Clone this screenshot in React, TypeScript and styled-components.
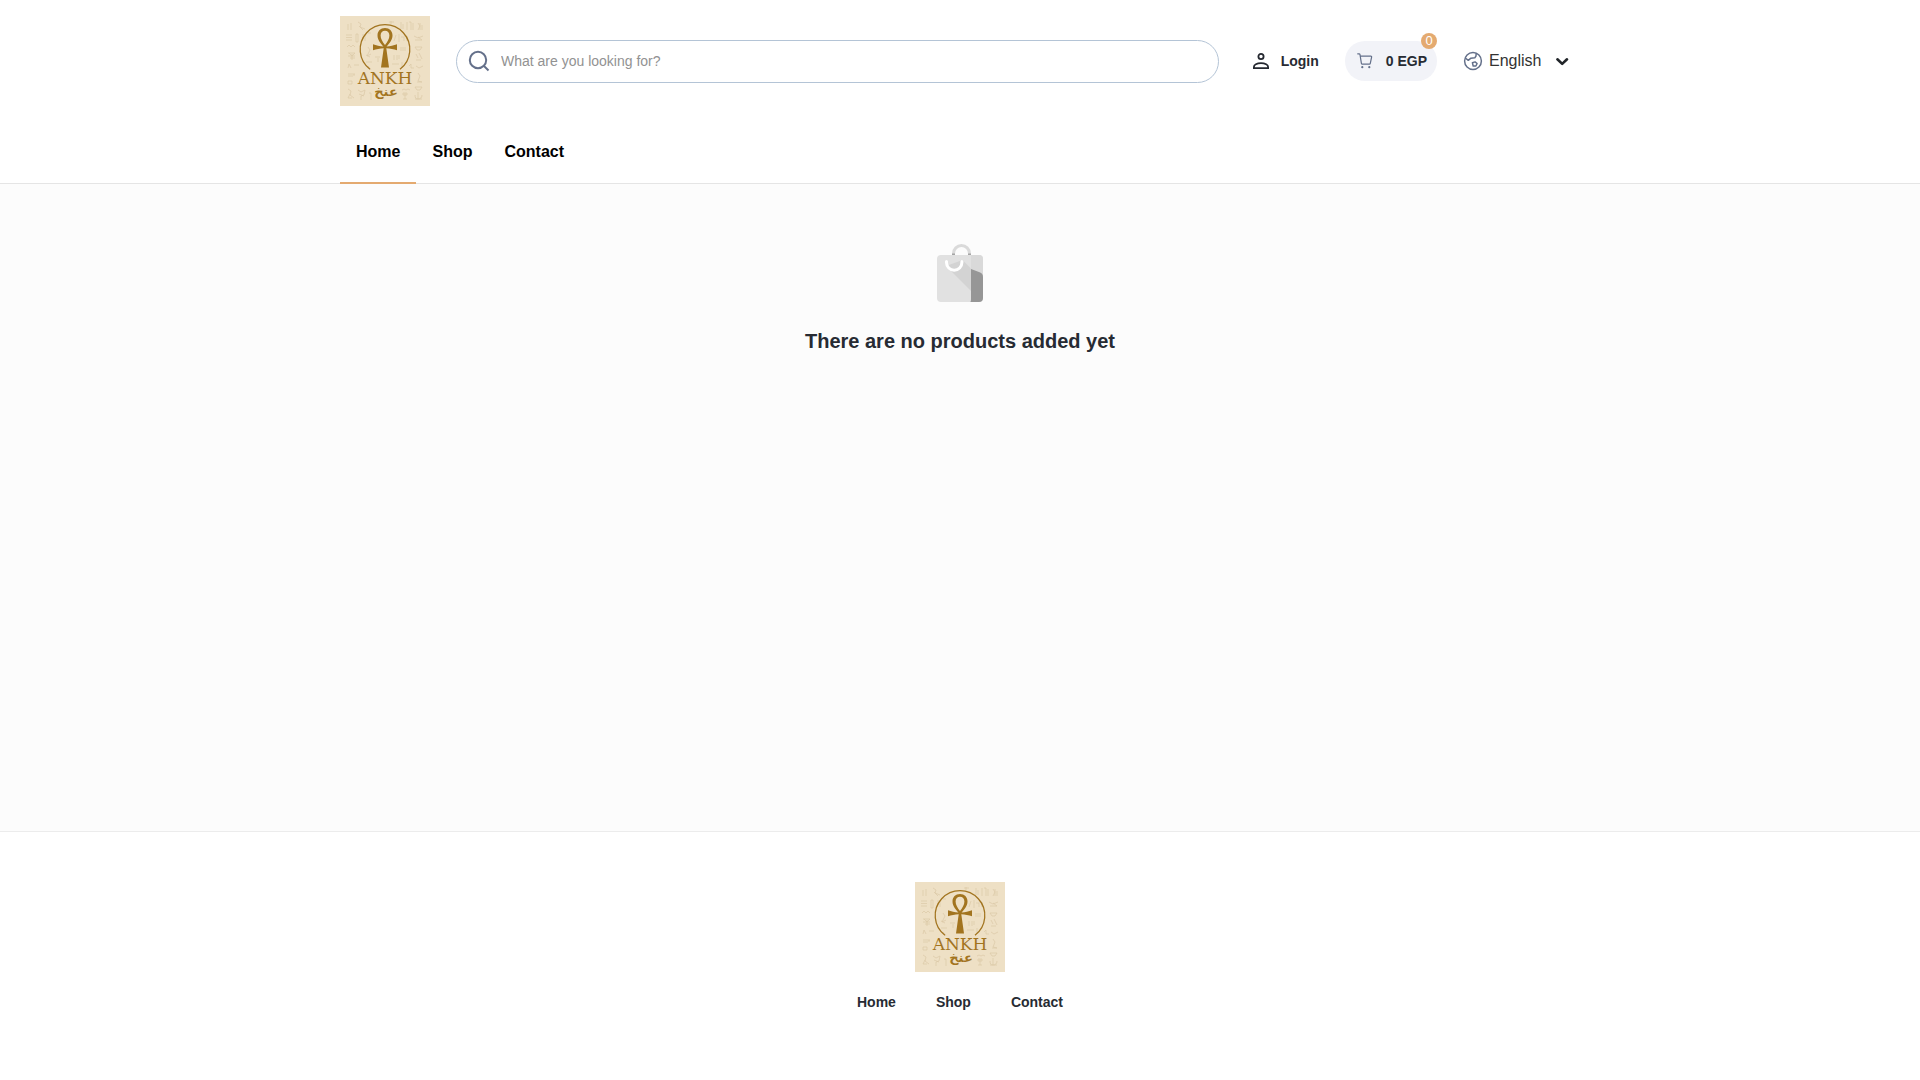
import React from "react";
import styled, { createGlobalStyle } from "styled-components";

const GlobalStyle = createGlobalStyle`
  *, *::before, *::after { box-sizing: border-box; }
  body {
    margin: 0;
    background: #fff;
    color: #272b33;
    font-family: "Liberation Sans", Arial, sans-serif;
    font-size: 16px;
    line-height: 24px;
  }
  a { color: inherit; text-decoration: none; }
  button, input, select { font: inherit; color: inherit; }
`;

const Container = styled.div`
  max-width: 1240px;
  margin: 0 auto;
`;

const Header = styled.header`
  background: #fff;
  border-bottom: 1px solid #e5e5e5;
`;

const TopBar = styled.div`
  display: flex;
  align-items: center;
  gap: 26px;
  padding: 16px 0;
`;

const LogoLink = styled.a`
  display: block;
  flex: none;
  svg { display: block; }
`;

const SearchBox = styled.form`
  flex: 1;
  min-width: 0;
  display: flex;
  align-items: center;
  gap: 9px;
  height: 43px;
  padding: 0 20px 0 11px;
  border: 1px solid #b4c4d6;
  border-radius: 22px;
`;

const SearchInput = styled.input`
  flex: 1;
  min-width: 0;
  padding: 0;
  border: 0;
  outline: 0;
  background: transparent;
  font-size: 14px;
  &::placeholder { color: #929292; opacity: 1; }
`;

const IconButton = styled.button`
  display: flex;
  padding: 0;
  border: 0;
  background: none;
  cursor: pointer;
`;

const LoginLink = styled.a`
  display: flex;
  align-items: center;
  gap: 12px;
  padding-left: 8px;
  font-size: 14px;
  font-weight: 700;
`;

const CartButton = styled.button`
  position: relative;
  display: flex;
  align-items: center;
  gap: 13px;
  height: 40px;
  padding: 0 10px 0 12px;
  border: 0;
  border-radius: 20px;
  background: #f2f3f8;
  font-size: 14px;
  font-weight: 700;
  white-space: nowrap;
  cursor: pointer;
`;

const Badge = styled.span`
  position: absolute;
  top: -8px;
  right: 0;
  width: 16px;
  height: 16px;
  border-radius: 50%;
  background: #e4aa70;
  color: #fff;
  font-size: 13px;
  font-weight: 400;
  line-height: 16px;
  text-align: center;
`;

const Language = styled.label`
  display: flex;
  align-items: center;
  gap: 6px;
  padding-right: 10px;
  color: #333;
`;

const LanguageField = styled.span`
  display: grid;
  align-items: center;
  > * { grid-area: 1 / 1; }
  > svg { justify-self: end; pointer-events: none; }
`;

const LanguageSelect = styled.select`
  width: 81px;
  height: 24px;
  padding: 0;
  border: 0;
  outline: 0;
  appearance: none;
  background: transparent;
  cursor: pointer;
`;

const Nav = styled.nav`
  display: flex;
`;

const Tab = styled.a<{ $active?: boolean }>`
  padding: 18px 16px;
  margin-bottom: -1px;
  border-bottom: 2px solid ${(p) => (p.$active ? "#e4aa70" : "transparent")};
  color: #000;
  font-weight: 700;
`;

const Main = styled.main`
  display: flex;
  flex-direction: column;
  align-items: center;
  gap: 24px;
  min-height: 60vh;
  padding: 60px 16px;
  border-bottom: 1px solid #ececec;
  background: #fcfcfc;
`;

const EmptyTitle = styled.h1`
  margin: 0;
  font-size: 20px;
  line-height: 26px;
  font-weight: 700;
`;

const Footer = styled.footer`
  display: flex;
  flex-direction: column;
  align-items: center;
  gap: 18px;
  padding: 50px 16px;
`;

const FooterNav = styled.nav`
  display: flex;
  gap: 40px;
  font-size: 14px;
  font-weight: 700;
`;

const GOLD = "#a2741f";

function Logo() {
  return (
    <svg width="90" height="90" viewBox="0 0 90 90" role="img" aria-label="Ankh">
      <rect width="90" height="90" fill="#eee0c5" />
      <g fill="none" stroke="#d0ba94" strokeWidth=".7" opacity=".6">
        <path d="M8 8v6M11 7v7M18 6l3 2-1 3 5 2M19 10l4 4M49 6h5M51 5v3M61 6v7M63 8v5M67 6v8M69 6h2v8M73 7v7M78 7l2 3-2 4M80 7v7M82 9v5" />
        <path d="M6 19h6M6 21.500h6M6 24h6M16 18h2v8h-2zM22 19h3v6M28 17h3M74 20l4 2 5-2M75 24h7l-4-3M56 19l-2 6M59 18v8M61 21h3v4M64 20h3v5" />
        <path d="M7 31l2-2 2 2 2-2 2 2M75 31h7l-2 3h-3zM9 37l3 3 3-3M8 40h7M10 42h5M12 38v6M8 37h7M60 32h6M60 34h6M54 39v5M57 39v5M59 39v4M28 31l2 3-3 6 4-2M26 39l4 2M76 38l2 4M79 37l3 6M76 44h5" />
        <path d="M8 52l1-4 2 4M14 49h5M26 46h6M35 41h5M38 42v4M28 50l3 4M52 48h7M62 46v5M69 50l2-2v4h3M76 50l3 2 4-2" />
        <path d="M8 58h7M8 60h5M8 65h4v3H8zM13 59h2M78 57l2 3-2 5 4 1M77 66h5" />
        <path d="M8 73l3 2-1 4 4 3M10 78l-2 4h4M18 74l3 2 4-2-1 5-3 1v4M19 78l5 2M29 77h2v7M62 74l2-1 2 1 2-1 2 1M65 77v6M63 77h4v2h-4zM63 83h4M75 71h7l-2 3h-3zM78 76v7M75 79c0 3 1 4 3 4s4-1 4-4M75 83h7" />
      </g>
      <path d="M30 53.200A24.800 24.800 0 1 1 60 53.200" fill="none" stroke={GOLD} strokeWidth="1.300" />
      <path
        fill={GOLD}
        fillRule="evenodd"
        d="M45 12c-4.500 0-7.500 3.200-7.500 7.400 0 4.700 3.500 8.200 5.900 11-3.600-.3-7.200-1.100-10.400-2.200v6c3.200-1 7-1.800 10.700-2L41 51.500h8l-2.700-19.300c3.700.2 7.500 1 10.700 2v-6c-3.200 1.100-6.800 1.900-10.400 2.200 2.400-2.800 5.900-6.300 5.900-11C52.500 15.200 49.500 12 45 12zm0 2.700c2.600 0 4.400 1.900 4.400 4.800 0 3.300-2 6.500-4.400 9.500-2.400-3-4.400-6.200-4.400-9.500 0-2.900 1.800-4.800 4.400-4.800z"
      />
      <text x="45" y="67.500" textAnchor="middle" fill={GOLD} fontFamily="DejaVu Serif, serif" fontSize="17">
        ANKH
      </text>
      <text x="46" y="80" textAnchor="middle" fill={GOLD} fontFamily="DejaVu Sans, sans-serif" fontSize="13" fontWeight="700">
        عنخ
      </text>
    </svg>
  );
}

function SearchIcon() {
  return (
    <svg width="24" height="24" viewBox="0 0 24 24" fill="none" stroke="#64708a" strokeWidth="2">
      <circle cx="10" cy="11" r="8.200" />
      <path d="M15.500 16.500l5 5" />
    </svg>
  );
}

function UserIcon() {
  return (
    <svg width="16" height="16" viewBox="0 0 16 16" fill="none" stroke="#242830" strokeWidth="1.800">
      <circle cx="8" cy="3.500" r="2.600" />
      <path d="M.9 15.100v-1.200c0-2 3-3.700 7.100-3.700s7.100 1.700 7.100 3.700v1.200z" />
    </svg>
  );
}

function CartIcon() {
  return (
    <svg width="16" height="16" viewBox="0 0 16 16" fill="none" stroke="#64708a" strokeWidth="1.200" strokeLinecap="round" strokeLinejoin="round">
      <path d="M.7.800h1.400c.5 0 .8.300.9.800l1.400 8.700c.1.500.4.800.9.800h7c.5 0 .9-.3 1-.8l1.300-6.200c.1-.5-.2-.9-.7-.9H3.400" />
      <circle cx="5.300" cy="14.200" r=".5" fill="#64708a" />
      <circle cx="12.300" cy="14.200" r=".5" fill="#64708a" />
    </svg>
  );
}

function GlobeIcon() {
  return (
    <svg width="20" height="20" viewBox="0 0 20 20" fill="none" stroke="#64708a" strokeWidth="1.500" strokeLinejoin="round">
      <circle cx="10" cy="10" r="8.400" />
      <path d="M2.300 7l3 2.300 2.600-2.100 3.900-.4 1.200-1.800.2-2.900M9.400 11.700l2.700-.8 2 1.600-1.200 2.500-2.700.1z" />
    </svg>
  );
}

function ChevronIcon() {
  return (
    <svg width="16" height="16" viewBox="0 0 16 16" fill="none" stroke="#212529" strokeWidth="2.600" strokeLinecap="round" strokeLinejoin="round">
      <path d="M3.400 6.300L8.200 10.900 13 6.300" />
    </svg>
  );
}

function BagIcon() {
  return (
    <svg width="60" height="60" viewBox="0 0 60 60" aria-hidden="true">
      <path d="M23.500 12V9.500a8 8 0 0 1 16 0V12" fill="none" stroke="#dadada" strokeWidth="3" />
      <path d="M22 9.500h3V12h-3zM38 9.500h3V12h-3z" fill="#a5a5a5" />
      <rect x="7" y="11" width="46" height="47" rx="4" fill="#e1e1e1" />
      <path d="M41 11h8a4 4 0 0 1 4 4v18L41 26z" fill="#d9d9d9" />
      <path d="M32.500 16L41 24.500V47L16 22z" fill="#d3d3d3" />
      <path d="M41 25l8.600 3.300A5 5 0 0 1 53 33v21a4 4 0 0 1-4 4h-9c1 0 1-2 1-4z" fill="#969696" />
      <path d="M16.500 17.500v1a7.700 7.700 0 0 0 15.400 0v-1" fill="none" stroke="#fff" strokeWidth="3" strokeLinecap="round" />
    </svg>
  );
}

export default function App() {
  return (
    <>
      <GlobalStyle />
      <Header>
        <Container>
          <TopBar>
            <LogoLink href="#home"><Logo /></LogoLink>
            <SearchBox role="search" onSubmit={(e: React.FormEvent) => e.preventDefault()}>
              <IconButton type="submit" aria-label="Search"><SearchIcon /></IconButton>
              <SearchInput type="text" aria-label="Search products" placeholder="What are you looking for?" />
            </SearchBox>
            <LoginLink href="#login"><UserIcon />Login</LoginLink>
            <CartButton type="button">
              <CartIcon />
              0 EGP
              <Badge>0</Badge>
            </CartButton>
            <Language aria-label="Language">
              <GlobeIcon />
              <LanguageField>
                <LanguageSelect aria-label="Language" defaultValue="en">
                  <option value="en">English</option>
                </LanguageSelect>
                <ChevronIcon />
              </LanguageField>
            </Language>
          </TopBar>
          <Nav>
            <Tab href="#home" $active>Home</Tab>
            <Tab href="#shop">Shop</Tab>
            <Tab href="#contact">Contact</Tab>
          </Nav>
        </Container>
      </Header>
      <Main>
        <BagIcon />
        <EmptyTitle>There are no products added yet</EmptyTitle>
      </Main>
      <Footer>
        <LogoLink href="#home"><Logo /></LogoLink>
        <FooterNav>
          <a href="#home">Home</a>
          <a href="#shop">Shop</a>
          <a href="#contact">Contact</a>
        </FooterNav>
      </Footer>
    </>
  );
}
